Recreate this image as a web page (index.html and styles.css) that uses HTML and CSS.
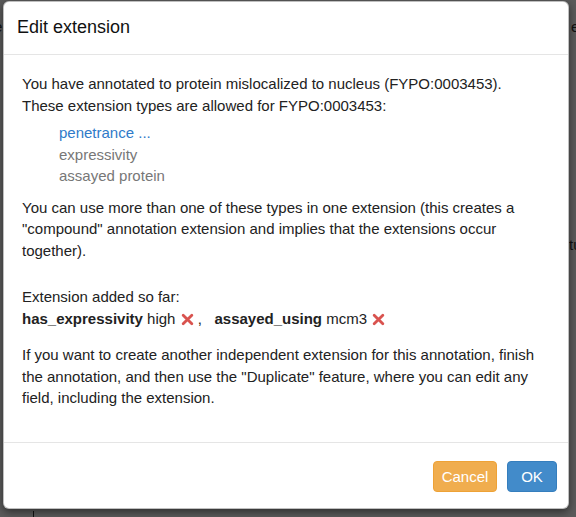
FILE: index.html
```html
<!DOCTYPE html>
<html>
<head>
<meta charset="utf-8">
<link rel="stylesheet" href="styles.css">
</head>
<body>
<div class="under">
  <span class="u-l">e</span>
  <span class="u-r">e</span>
  <span class="u-r2">tu</span>
  <span class="u-tick"></span>
</div>
<div class="modal">
  <div class="modal-header">
    <h4>Edit extension</h4>
  </div>
  <div class="modal-body">
    <p class="intro">You have annotated to protein mislocalized to nucleus (FYPO:0003453).<br>These extension types are allowed for FYPO:0003453:</p>
    <ul class="types">
      <li><a class="link">penetrance ...</a></li>
      <li class="muted">expressivity</li>
      <li class="muted">assayed protein</li>
    </ul>
    <p class="compound">You can use more than one of these types in one extension (this creates a "compound" annotation extension and implies that the extensions occur together).</p>
    <p class="added">Extension added so far:<br><b>has_expressivity</b> high <span class="x"><svg viewBox="0 0 12 12" width="13" height="13"><path d="M2 2 L10 10 M10 2 L2 10" stroke="#d9534f" stroke-width="2.6" stroke-linecap="round"/></svg></span> , &nbsp; <b>assayed_using</b> mcm3 <span class="x"><svg viewBox="0 0 12 12" width="13" height="13"><path d="M2 2 L10 10 M10 2 L2 10" stroke="#d9534f" stroke-width="2.6" stroke-linecap="round"/></svg></span></p>
    <p class="dup">If you want to create another independent extension for this annotation, finish the annotation, and then use the "Duplicate" feature, where you can edit any field, including the extension.</p>
  </div>
  <div class="modal-footer">
    <button class="btn btn-cancel">Cancel</button>
    <button class="btn btn-ok">OK</button>
  </div>
</div>
</body>
</html>
```
FILE: styles.css
```css
html, body {
  margin: 0;
  padding: 0;
}
body {
  width: 576px;
  height: 517px;
  overflow: hidden;
  background: #5b5b5b;
  font-family: "Liberation Sans", Arial, sans-serif;
  color: #222;
  position: relative;
}
.under span {
  position: absolute;
  color: #111;
  font-size: 15px;
}
.u-l { left: -6px; top: 18px; }
.u-r { left: 571px; top: 18px; }
.u-r2 { left: 569px; top: 236px; }
.u-tick {
  left: 33px;
  top: 511px;
  width: 1px;
  height: 6px;
  background: #111;
}
.modal {
  position: relative;
  margin: 1px 0 0 3px;
  width: 564px;
  background: #fff;
  border: 1px solid rgba(0,0,0,0.25);
  border-radius: 6px;
  box-shadow: 0 3px 9px rgba(0,0,0,0.5);
}
.modal-header {
  padding: 13px 15px 14px 13px;
  border-bottom: 1px solid #e5e5e5;
}
.modal-header h4 {
  margin: 0;
  font-size: 18px;
  line-height: 25px;
  font-weight: normal;
  color: #111;
}
.modal-body {
  padding: 18px 18px 33px 18px;
  font-size: 15px;
  line-height: 21.5px;
}
.modal-body p {
  margin: 0;
}
.types {
  list-style: none;
  margin: 6px 0 10px 0;
  padding: 0 0 0 37px;
}
.link {
  color: #2f7bc9;
  text-decoration: none;
}
.muted {
  color: #777;
}
.compound {
  margin-bottom: 25px !important;
}
.added b {
  font-weight: bold;
  color: #222;
}
.x {
  display: inline-block;
  vertical-align: -2px;
  margin-left: 1px;
}
.x svg { display: block; }
.dup {
  margin-top: 15px !important;
}
.modal-footer {
  display: flex;
  justify-content: flex-end;
  gap: 10px;
  padding: 18px 11px 16px 15px;
  border-top: 1px solid #e5e5e5;
}
.btn {
  height: 31px;
  border-radius: 4px;
  font-family: "Liberation Sans", Arial, sans-serif;
  font-size: 15px;
  color: #fff;
  padding: 0;
  cursor: pointer;
}
.btn-cancel {
  width: 64px;
  background: #f0ad4e;
  border: 1px solid #eea236;
}
.btn-ok {
  width: 50px;
  background: #428bca;
  border: 1px solid #357ebd;
}
```
